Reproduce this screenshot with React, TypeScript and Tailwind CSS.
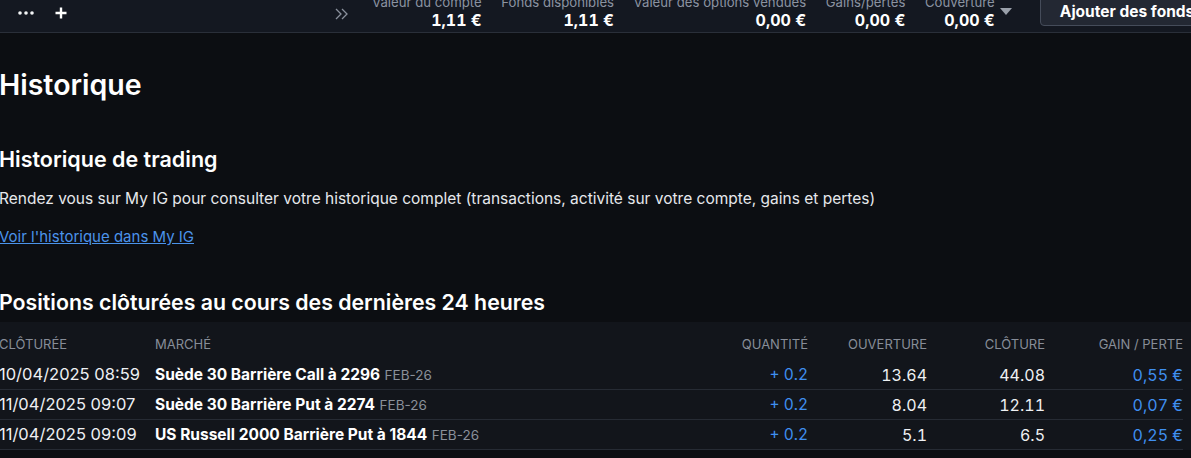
import React from "react";

const stats = [
  { label: "Valeur du compte", value: "1,11 €" },
  { label: "Fonds disponibles", value: "1,11 €" },
  { label: "Valeur des options vendues", value: "0,00 €" },
  { label: "Gains/pertes", value: "0,00 €" },
  { label: "Couverture", value: "0,00 €" },
];

const rows = [
  { closed: "10/04/2025 08:59", market: "Suède 30 Barrière Call à 2296", expiry: "FEB-26", qty: "+ 0.2", open: "13.64", close: "44.08", pnl: "0,55 €" },
  { closed: "11/04/2025 09:07", market: "Suède 30 Barrière Put à 2274", expiry: "FEB-26", qty: "+ 0.2", open: "8.04", close: "12.11", pnl: "0,07 €" },
  { closed: "11/04/2025 09:09", market: "US Russell 2000 Barrière Put à 1844", expiry: "FEB-26", qty: "+ 0.2", open: "5.1", close: "6.5", pnl: "0,25 €" },
];

const TopBar = () => {
  return (
    <div className="flex h-[33px] items-start overflow-hidden border-b border-[#2a2f39] bg-[#141821]">
      {/* menu + add */}
      <div className="flex h-[26px] shrink-0 items-center">
        <svg width="16" height="4" viewBox="0 0 16 4" className="ml-[18px]">
          <circle cx="2" cy="2" r="1.8" fill="#f3f4f6" />
          <circle cx="8" cy="2" r="1.8" fill="#f3f4f6" />
          <circle cx="14" cy="2" r="1.8" fill="#f3f4f6" />
        </svg>
        <svg width="12" height="12" viewBox="0 0 12 12" className="ml-[21px]">
          <path d="M6 0.5v11M0.5 6h11" stroke="#ffffff" strokeWidth="2.4" />
        </svg>
      </div>

      <svg width="13" height="12" viewBox="0 0 13 12" className="ml-[268px] mt-[8px] shrink-0">
        <path d="M1 1l5 5-5 5M7 1l5 5-5 5" stroke="#8a909c" strokeWidth="1.3" fill="none" />
      </svg>

      <div className="ml-[24px] -mt-[6px] flex shrink-0 gap-[19.5px]">
        {stats.map((s) => (
          <div key={s.label} className="flex flex-col items-end whitespace-nowrap">
            <span className="text-[13.2px] leading-[17px] text-[#8b93a1]">{s.label}</span>
            <span className="text-[16px] font-bold leading-[19px] text-white tabular-nums">{s.value}</span>
          </div>
        ))}
      </div>

      <svg width="12" height="7" viewBox="0 0 12 7" className="ml-[5px] mt-[8px] shrink-0">
        <path d="M0 0h12L6 7z" fill="#9aa0aa" />
      </svg>

      <button className="-mt-[5px] ml-[28px] h-[31px] shrink-0 whitespace-nowrap rounded-[4px] border border-[#454c5a] bg-[#232833] pl-[19px] pr-[20px] pt-[3px] text-[15.5px] font-bold text-white">
        Ajouter des fonds
      </button>
    </div>
  );
};

const App = () => {
  return (
    <div
      className="h-[458px] w-[1191px] overflow-hidden bg-[#0c0e12] text-[#eef0f3]"
      style={{ fontFamily: "Inter, 'Noto Sans', sans-serif" }}
    >
      <TopBar />

      <div className="-ml-[1px]">
        <h1 className="mt-[34px] text-[28.5px] font-semibold leading-[36px] text-white">Historique</h1>

        <h2 className="mt-[42px] text-[21.5px] font-semibold leading-[28px] text-white">Historique de trading</h2>
        <p className="mt-[16px] whitespace-nowrap text-[15.5px] leading-[20px] text-[#e6e8ec]">
          Rendez vous sur My IG pour consulter votre historique complet (transactions, activité sur votre compte, gains et pertes)
        </p>
        <a href="#" className="mt-[18px] block text-[15px] leading-[20px] text-[#4b93ea] underline">
          Voir l'historique dans My IG
        </a>

        <h2 className="mt-[41px] text-[21.3px] font-semibold leading-[28px] text-white">
          Positions clôturées au cours des dernières 24 heures
        </h2>

        <div className="mt-[6px] bg-[#12151b] pr-[8px]">
          <div className="grid h-[38px] grid-cols-[156px_1fr_120px_119px_118px_138px] items-center pt-[7px] text-[13px] text-[#878d98]">
            <span>CLÔTURÉE</span>
            <span>MARCHÉ</span>
            <span className="text-right">QUANTITÉ</span>
            <span className="text-right">OUVERTURE</span>
            <span className="text-right">CLÔTURE</span>
            <span className="text-right">GAIN / PERTE</span>
          </div>
          {rows.map((r) => (
            <div
              key={r.closed}
              className="grid h-[30px] grid-cols-[156px_1fr_120px_119px_118px_138px] items-center border-b border-[#262b34] text-[16px]"
            >
              <span className="whitespace-nowrap text-[16.5px] text-[#eef0f3]">{r.closed}</span>
              <span className="whitespace-nowrap">
                <span className="text-[15.5px] font-bold text-white">{r.market}</span>{" "}
                <span className="text-[13.5px] text-[#8a909a]">{r.expiry}</span>
              </span>
              <span className="text-right text-[15.5px] text-[#3f8ff0] tabular-nums">{r.qty}</span>
              <span className="text-right tabular-nums">{r.open}</span>
              <span className="text-right tabular-nums">{r.close}</span>
              <span className="text-right text-[#3f8ff0] tabular-nums">{r.pnl}</span>
            </div>
          ))}
        </div>
      </div>
    </div>
  );
};

export default App;
